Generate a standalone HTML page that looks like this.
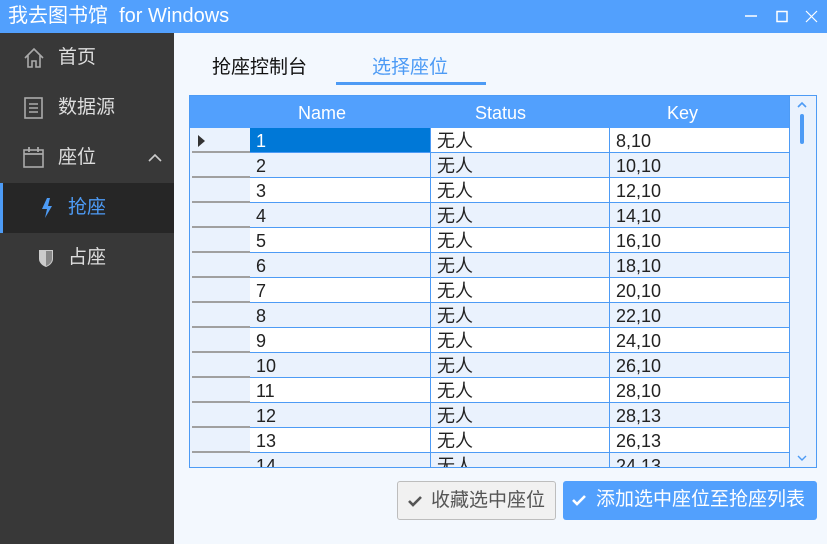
<!DOCTYPE html>
<html><head><meta charset="utf-8"><style>
*{margin:0;padding:0;box-sizing:border-box}
body{width:827px;height:544px;overflow:hidden;font-family:"Liberation Sans","Noto Sans CJK SC",sans-serif;background:#f3f8fe;position:relative}
.title{position:absolute;left:0;top:0;width:827px;height:33px;background:#52a0fd;color:#fff;font-size:20px;line-height:32px;padding-left:8px}
.side{position:absolute;left:0;top:33px;width:174px;height:511px;background:#383838}
.it{position:absolute;left:0;width:174px;height:50px;color:#ddd;font-size:19px;line-height:50px}
.grid{position:absolute;left:189px;top:95px;width:628px;height:373px;border:1px solid #4d9bf5;background:#eaf2fd;overflow:hidden}
.hdr{position:absolute;left:0;top:0;width:600px;height:32px;background:#52a0fd;color:#fff;font-size:18px;line-height:34px}
.row{position:absolute;left:0;width:600px;height:25px;font-size:18px;line-height:27px;color:#222}
.c{position:absolute;top:0;height:25px;border-right:1px solid #4d9bf5;border-bottom:1px solid #4d9bf5;padding-left:6px}
.rh{position:absolute;left:2px;top:0;width:58px;height:25px;border-bottom:2px solid #a0a0a0;background:#eaf2fd}
.btn{position:absolute;top:481px;height:39px;border-radius:3px;font-size:19px;line-height:37px}
</style></head><body>
<div class="title">我去图书馆&nbsp; for Windows
<svg style="position:absolute;left:740px;top:8px" width="80" height="18"><line x1="5" y1="8" x2="17" y2="8" stroke="#fff" stroke-width="1.5"/><rect x="37" y="3.5" width="10" height="10" fill="none" stroke="#fff" stroke-width="1.5"/><path d="M66 3 L77 14 M77 3 L66 14" stroke="#fff" stroke-width="1.2"/></svg></div>
<div class="side">
<div class="it" style="top:0"><svg style="position:absolute;left:23px;top:14px" width="22" height="22"><path d="M2 11 L11 2 L20 11 M5 8 V20 H9 V14 H13 V20 H17 V8" fill="none" stroke="#aaa" stroke-width="1.6"/></svg><span style="position:absolute;left:58px">首页</span></div>
<div class="it" style="top:50px"><svg style="position:absolute;left:24px;top:14px" width="20" height="22"><rect x="1" y="1" width="17" height="20" fill="none" stroke="#aaa" stroke-width="1.6"/><path d="M5 7H14M5 11H14M5 15H14" stroke="#aaa" stroke-width="1.4"/></svg><span style="position:absolute;left:58px">数据源</span></div>
<div class="it" style="top:100px"><svg style="position:absolute;left:23px;top:13px" width="22" height="22"><rect x="1" y="4" width="19" height="17" fill="none" stroke="#aaa" stroke-width="1.6"/><path d="M1 8H20M6 1V6M15 1V6" stroke="#aaa" stroke-width="1.8"/></svg><span style="position:absolute;left:58px">座位</span><svg style="position:absolute;left:148px;top:20px" width="14" height="10"><path d="M1 8 L7 2 L13 8" fill="none" stroke="#ccc" stroke-width="1.6"/></svg></div>
<div class="it" style="top:150px;background:#262626;border-left:3px solid #4d9bf5;color:#4d9bf5"><svg style="position:absolute;left:37px;top:14px" width="14" height="22"><path d="M7 1 L2 12 H7 L5 21 L12 9 H8 L10 1Z" fill="#4d9bf5"/></svg><span style="position:absolute;left:65px">抢座</span></div>
<div class="it" style="top:200px"><svg style="position:absolute;left:38px;top:16px" width="16" height="19"><path d="M1 1 H15 V10 C15 14 11 17 8 18 C5 17 1 14 1 10Z" fill="#ccc"/><path d="M8 2 V17 C11 16 14 13 14 10 V2Z" fill="#888"/></svg><span style="position:absolute;left:68px">占座</span></div>
</div>
<div style="position:absolute;left:212px;top:52px;font-size:19px;color:#111">抢座控制台</div>
<div style="position:absolute;left:372px;top:52px;font-size:19px;color:#4d9bf5">选择座位</div>
<div style="position:absolute;left:336px;top:82px;width:150px;height:3px;background:#4d9bf5"></div>
<div class="grid">
<div class="hdr"><span style="position:absolute;left:108px">Name</span><span style="position:absolute;left:285px">Status</span><span style="position:absolute;left:477px">Key</span></div>
<div id="rows"></div>
<div style="position:absolute;left:599px;top:0;width:28px;height:373px;background:#eaf2fd;border-left:1px solid #4d9bf5"></div>
<svg style="position:absolute;left:605px;top:4px" width="14" height="364"><path d="M3 7 L7 3 L11 7" fill="none" stroke="#4d9bf5" stroke-width="1.6"/><rect x="5" y="14" width="4" height="30" rx="2" fill="#4d9bf5"/><path d="M3 356 L7 360 L11 356" fill="none" stroke="#4d9bf5" stroke-width="1.4"/></svg>
</div>
<div class="btn" style="left:397px;width:159px;background:#f1f1f1;border:1px solid #bdbdbd;color:#555"><svg style="position:absolute;left:9px;top:12px" width="16" height="14"><path d="M2 7 L6 11 L14 3" fill="none" stroke="#555" stroke-width="2.6"/></svg><span style="position:absolute;left:33px">收藏选中座位</span></div>
<div class="btn" style="left:563px;width:254px;background:#52a0fd;color:#fff"><svg style="position:absolute;left:8px;top:12px" width="16" height="14"><path d="M2 7 L6 11 L14 3" fill="none" stroke="#fff" stroke-width="2.6"/></svg><span style="position:absolute;left:33px">添加选中座位至抢座列表</span></div>
<script>
var k=["8,10","10,10","12,10","14,10","16,10","18,10","20,10","22,10","24,10","26,10","28,10","28,13","26,13","24,13"],h="";
for(var i=0;i<14;i++){var bg=i%2?"#eaf2fd":"#fff";var nb=i==0?"#0078d7;color:#fff":bg;
h+='<div class="row" style="top:'+(32+i*25)+'px"><div class="rh">'+(i==0?'<svg style="position:absolute;left:6px;top:7px" width="8" height="12"><path d="M0 0 L7 6 L0 12Z" fill="#333"/></svg>':'')+'</div>'+
'<div class="c" style="left:60px;width:181px;background:'+nb+'">'+(i+1)+'</div>'+
'<div class="c" style="left:241px;width:179px;background:'+bg+'">无人</div>'+
'<div class="c" style="left:420px;width:180px;background:'+bg+'">'+k[i]+'</div></div>';}
document.getElementById("rows").innerHTML=h;
</script>
</body></html>
